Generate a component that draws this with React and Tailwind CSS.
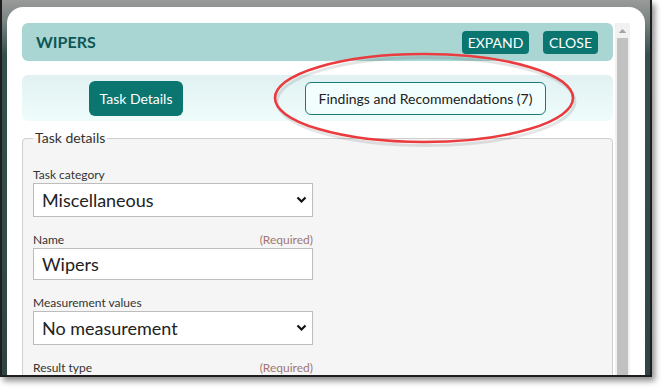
import React from 'react'

const font = "font-['Lato',sans-serif]"

function Chevron() {
  return (
    <svg width="11" height="8" viewBox="0 0 11 8" className="shrink-0">
      <path d="M1.5 1.5 L5.5 5.5 L9.5 1.5" fill="none" stroke="#111" strokeWidth="2.2" />
    </svg>
  )
}

function Label({ text, required }) {
  return (
    <div className="flex w-[280px] justify-between text-[12px] leading-[16px] text-[#333]">
      <span>{text}</span>
      {required && <span className="text-[#a07575]">(Required)</span>}
    </div>
  )
}

function SelectBox({ value }) {
  return (
    <div className="flex h-[34px] w-[280px] items-center justify-between border border-[#bdbdbd] bg-white pl-[8px] pr-[5px] text-[18px] text-[#222]">
      <span>{value}</span>
      <Chevron />
    </div>
  )
}

function TextBox({ value }) {
  return (
    <div className="flex h-[32px] w-[280px] items-center border border-[#bdbdbd] bg-white pl-[8px] text-[18px] text-[#222]">
      {value}
    </div>
  )
}

export default function App() {
  return (
    <div className={`h-[388px] w-[663px] bg-white ${font}`}>
      <div className="relative h-[377px] w-[652px] overflow-hidden border-x-2 border-b-2 border-[#1e1e1e] bg-[linear-gradient(to_bottom,#9a9a9a_0px,#7b8584_20px,#34504e_55px,#2f4543_100%)] shadow-[3px_4px_6px_rgba(0,0,0,0.45)]">
        <div className="ml-[5px] mt-[7px] flex h-[400px] w-[638px] rounded-t-[16px] bg-white">
          <div className="ml-[15px] mt-[16px] w-[591px]">
            {/* header */}
            <div className="flex h-[38px] items-center justify-between rounded-[6px] bg-[#a9d5d3] pl-[14px] pr-[15px]">
              <span className="text-[16px] font-bold text-[#0d5856]">WIPERS</span>
              <div className="flex gap-[14px]">
                <button className="h-[23px] w-[67px] rounded-[4px] bg-[#0b7570] text-[14px] text-white">EXPAND</button>
                <button className="h-[23px] w-[55px] rounded-[4px] bg-[#0b7570] text-[14px] text-white">CLOSE</button>
              </div>
            </div>

            {/* tabs */}
            <div className="mt-[14px] flex h-[46px] items-center rounded-[6px] bg-[linear-gradient(to_bottom,#e1f1f1,#effcfc)] pl-[67px]">
              <button className="h-[35px] w-[94px] rounded-[6px] bg-[#0b7570] text-[14px] text-white">Task Details</button>
              <button className="ml-[122px] h-[33px] w-[241px] rounded-[6px] border border-[#1b7a75] bg-[#f2fdfd] text-[14px] text-[#222]">
                Findings and Recommendations (7)
              </button>
            </div>

            {/* fieldset */}
            <fieldset className="mt-[7px] h-[300px] rounded-[4px] border border-[#cfcfcf] bg-[#f5f5f5] px-[10px]">
              <legend className="px-[2px] text-[14px] leading-[20px] text-[#333]">Task details</legend>
              <div className="mt-[19px] flex flex-col">
                <Label text="Task category" />
                <SelectBox value="Miscellaneous" />
                <div className="mt-[15px]">
                  <Label text="Name" required />
                </div>
                <TextBox value="Wipers" />
                <div className="mt-[15px]">
                  <Label text="Measurement values" />
                </div>
                <SelectBox value="No measurement" />
                <div className="mt-[15px]">
                  <Label text="Result type" required />
                </div>
                <TextBox value="" />
              </div>
            </fieldset>
          </div>

          {/* scrollbar */}
          <div className="ml-[2px] mt-[16px] flex w-[15px] flex-col items-center bg-[#f1f1f1]">
            <svg width="9" height="6" viewBox="0 0 9 6" className="mt-[5px]">
              <path d="M0.5 5.5 L4.5 1 L8.5 5.5 Z" fill="#a3a3a3" />
            </svg>
            <div className="mt-[4px] h-[400px] w-[11px] bg-[#c1c1c1]" />
          </div>
        </div>

        {/* annotation ellipse */}
        <svg className="pointer-events-none absolute left-0 top-0" width="652" height="377">
          <ellipse cx="423" cy="100" rx="149" ry="44" fill="none" stroke="rgba(0,0,0,0.1)" strokeWidth="3" transform="translate(1 1.5)" />
          <ellipse cx="422" cy="98" rx="149" ry="44" fill="none" stroke="#ea3b3f" strokeWidth="2.6" />
        </svg>
      </div>
    </div>
  )
}
